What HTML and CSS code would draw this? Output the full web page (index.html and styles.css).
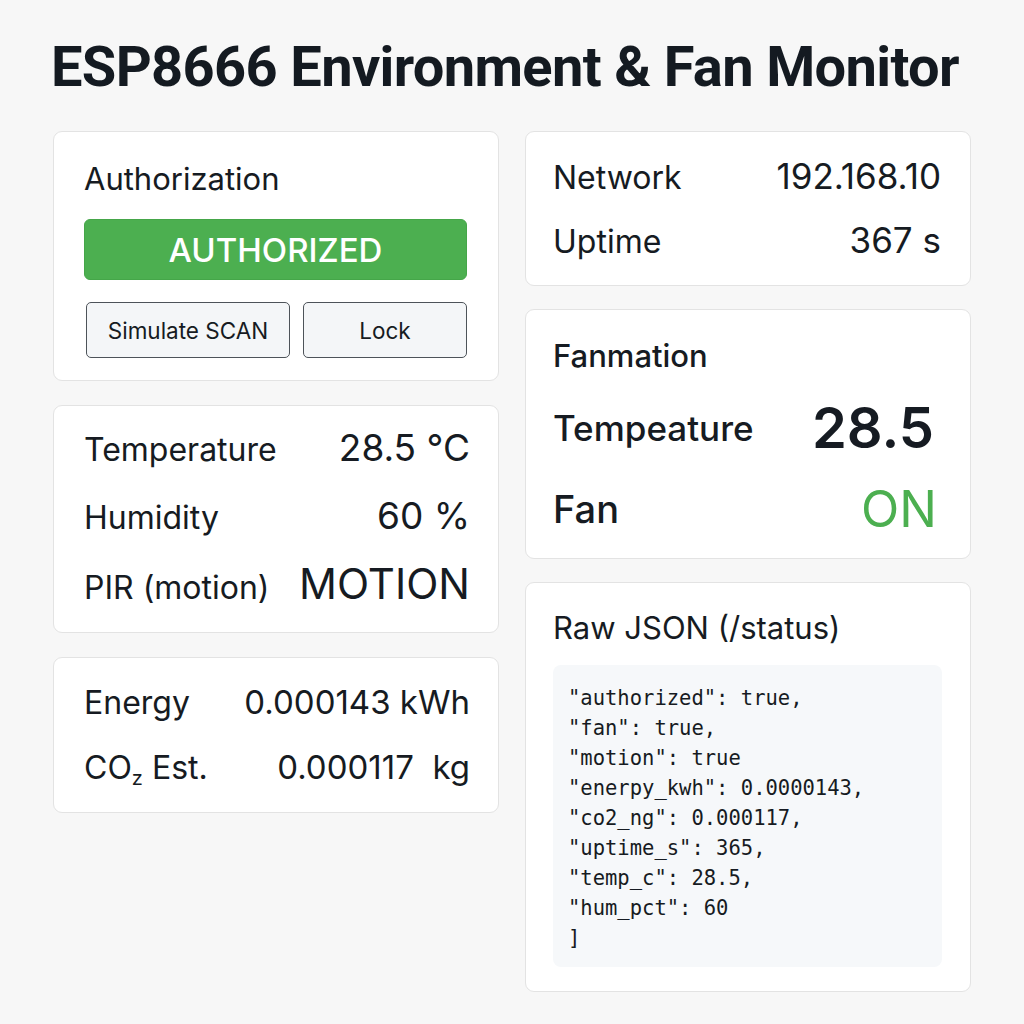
FILE: index.html
```html
<!DOCTYPE html>
<html lang="en">
<head>
<meta charset="utf-8">
<title>ESP8666 Environment &amp; Fan Monitor</title>
<link rel="stylesheet" href="styles.css">
</head>
<body>
<main class="page">
  <h1 class="page-title">ESP8666 Environment &amp; Fan Monitor</h1>
  <div class="grid">
    <div class="col">
      <section class="card card-auth">
        <h2 class="card-title">Authorization</h2>
        <div class="auth-badge">AUTHORIZED</div>
        <div class="btn-row">
          <button class="btn" type="button">Simulate SCAN</button>
          <button class="btn" type="button">Lock</button>
        </div>
      </section>
      <section class="card card-sensors">
        <div class="row"><span class="label">Temperature</span><span class="value">28.5 °C</span></div>
        <div class="row"><span class="label">Humidity</span><span class="value">60 %</span></div>
        <div class="row"><span class="label">PIR (motion)</span><span class="value value-motion">MOTION</span></div>
      </section>
      <section class="card card-energy">
        <div class="row"><span class="label">Energy</span><span class="value">0.000143 kWh</span></div>
        <div class="row"><span class="label">CO<sub class="sub">z</sub> Est.</span><span class="value">0.000117&nbsp; kg</span></div>
      </section>
    </div>
    <div class="col">
      <section class="card card-net">
        <div class="row"><span class="label">Network</span><span class="value">192.168.10</span></div>
        <div class="row"><span class="label">Uptime</span><span class="value">367 s</span></div>
      </section>
      <section class="card card-fan">
        <h2 class="card-title fan-title">Fanmation</h2>
        <div class="row row-temp"><span class="label label-strong">Tempeature</span><span class="value value-big">28.5</span></div>
        <div class="row row-fan"><span class="label label-fan">Fan</span><span class="value value-on">ON</span></div>
      </section>
      <section class="card card-json">
        <h2 class="card-title">Raw JSON (/status)</h2>
        <pre class="json">"authorized": true,
"fan": true,
"motion": true
"enerpy_kwh": 0.0000143,
"co2_ng": 0.000117,
"uptime_s": 365,
"temp_c": 28.5,
"hum_pct": 60
]</pre>
      </section>
    </div>
  </div>
</main>
</body>
</html>
```
FILE: styles.css
```css
* { box-sizing: border-box; }
html, body { margin: 0; padding: 0; }
body {
  background: #f7f7f7;
  color: #161b22;
  font-family: Inter, "Noto Sans", sans-serif;
}
.page {
  padding: 34px 0 0 53px;
  width: 1024px;
}
.page-title {
  margin: 0 0 31px -2px;
  font-family: Roboto, Inter, sans-serif;
  font-weight: 700;
  font-size: 56px;
  line-height: 66px;
  letter-spacing: -0.65px;
  color: #141a21;
}
.grid {
  display: grid;
  grid-template-columns: 446px 446px;
  column-gap: 26px;
  align-items: start;
}
.col {
  display: flex;
  flex-direction: column;
  gap: 24px;
}
.col + .col { gap: 23px; }
.card {
  background: #ffffff;
  border: 1px solid #e3e3e3;
  border-radius: 9px;
  padding: 0 30px;
}
.col + .col .card { padding-left: 27px; padding-right: 29px; }
.card-title {
  margin: 0;
  font-size: 31px;
  font-weight: 400;
  line-height: 36px;
}
.card-auth { padding: 29px 31px 22px 30px; }
.auth-badge {
  margin-top: 22px;
  height: 61px;
  background: #4caf50;
  border: 1px solid #45a649;
  border-radius: 6px;
  color: #fff;
  font-size: 33px;
  font-weight: 500;
  display: flex;
  align-items: center;
  justify-content: center;
}
.btn-row {
  margin-top: 22px;
  padding-left: 2px;
  display: grid;
  grid-template-columns: 204px 1fr;
  gap: 13px;
}
.btn {
  height: 56px;
  background: #f4f6f8;
  border: 1px solid #4d5359;
  border-radius: 5px;
  font-family: Inter, sans-serif;
  font-size: 22.5px;
  color: #161b22;
}
.row {
  display: flex;
  justify-content: space-between;
  align-items: baseline;
}
.label { font-size: 32px; }
.value { font-size: 37px; }
.card-sensors { padding-top: 8px; padding-bottom: 14px; padding-right: 28px; }
.card-sensors .row { height: 68px; line-height: 68px; }
.value-motion { font-size: 42px; font-weight: 400; }
.card-energy { padding-top: 12px; padding-bottom: 12px; padding-right: 28px; }
.card-energy .row { height: 65px; line-height: 65px; }
.card-energy .value { font-size: 33px; }
.sub { font-size: 20px; vertical-align: -6px; line-height: 0; }
.col + .col .card-net { padding-top: 12px; padding-bottom: 13px; }
.card-net .row { height: 64px; line-height: 64px; }
.card-net .value { font-size: 35px; }
.col + .col .card-fan { padding-top: 28px; padding-bottom: 9px; padding-right: 36px; }
.fan-title { font-weight: 500; font-size: 31px; }
.card-fan .row { align-items: center; height: 80px; line-height: 80px; }
.row-temp { margin-top: 14px; }
.row-fan { margin-top: 1px; }
.label-strong { font-size: 35px; font-weight: 500; }
.value-big { font-size: 56px; font-weight: 600; }
.label-fan { font-size: 38px; font-weight: 500; }
.value-on { font-size: 50px; color: #4caf50; font-weight: 400; margin-right: -3px; }
.col + .col .card-json { padding-top: 27px; padding-bottom: 24px; padding-right: 28px; }
.json {
  margin: 19px 0 0 0;
  background: #f6f8fa;
  border-radius: 8px;
  padding: 18px 15px 18px 15px;
  height: 302px;
  font-family: "DejaVu Sans Mono", "Liberation Mono", monospace;
  font-size: 20.5px;
  line-height: 30px;
  color: #161b22;
}
```
